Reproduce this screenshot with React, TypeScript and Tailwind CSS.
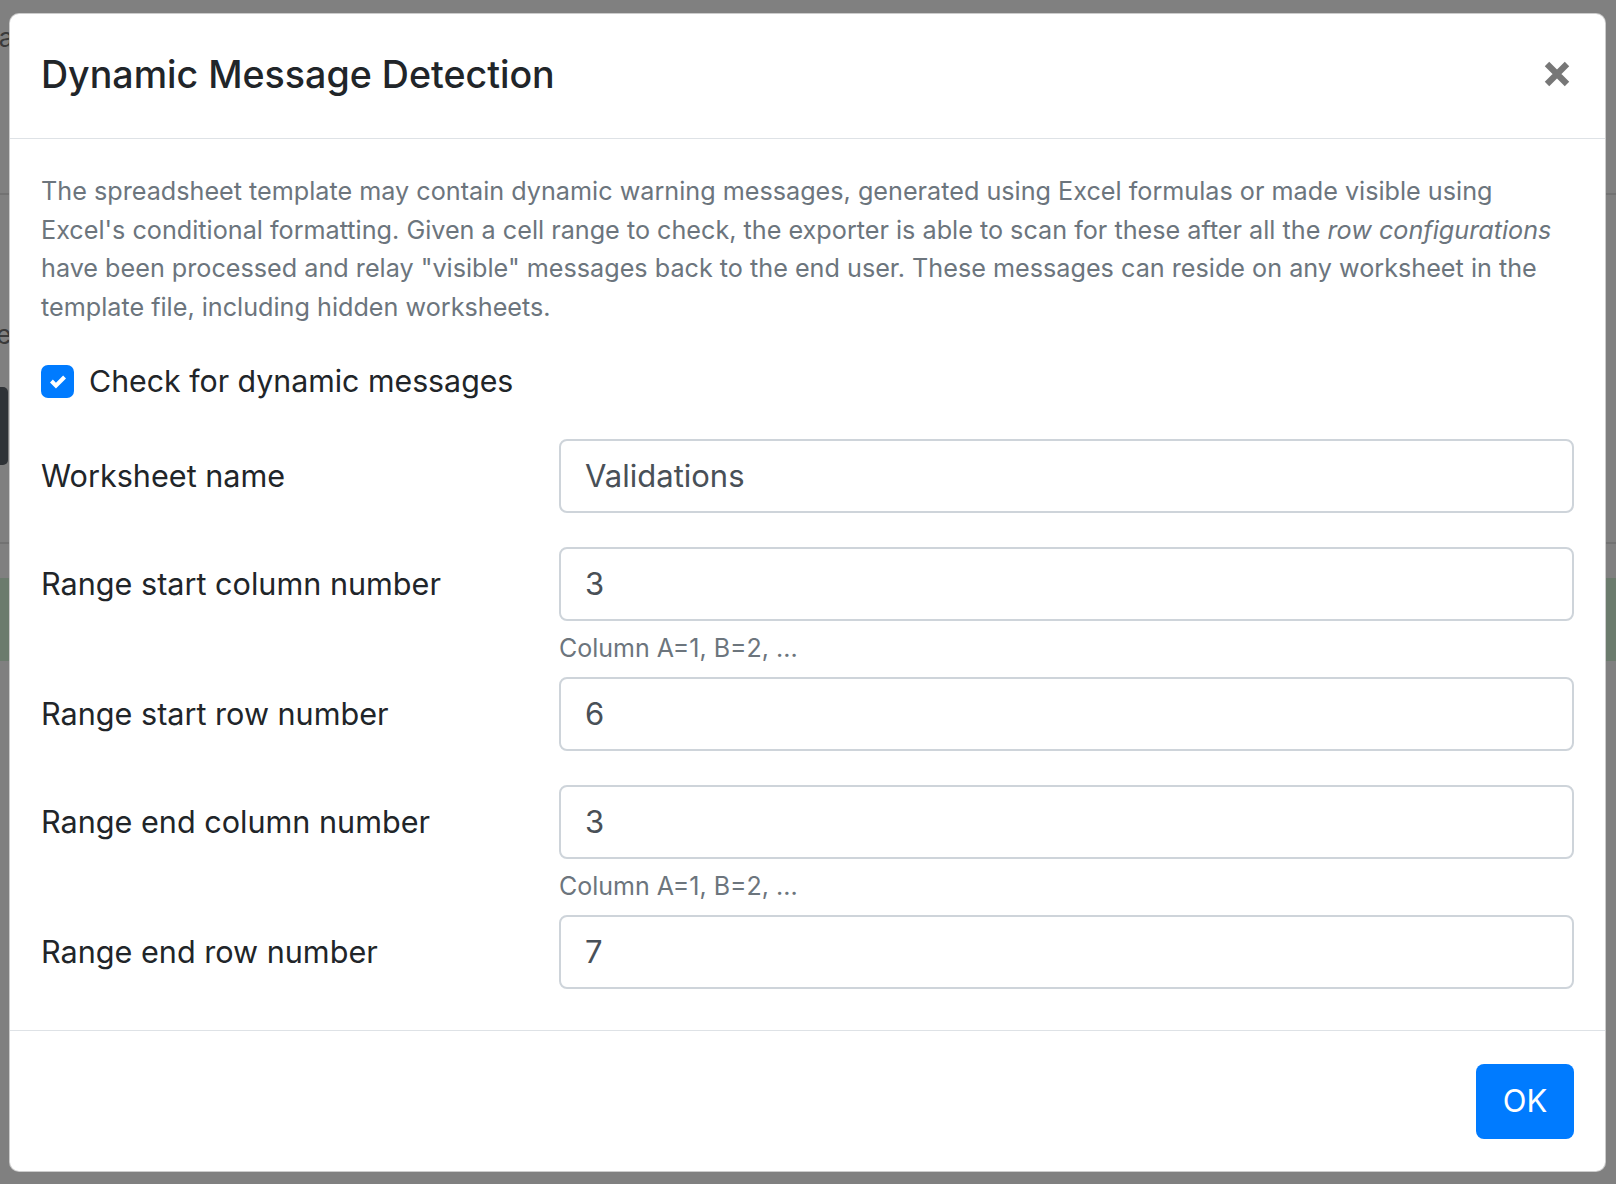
import React from "react";

function Field({ label, value, help }: { label: string; value: string; help?: string }) {
  return (
    <div className={help ? "flex mb-[10px]" : "flex mb-[34px] last:mb-0"}>
      <div className="w-[518px] shrink-0 h-[74px] flex items-center text-[30.6px] text-[#212529]">{label}</div>
      <div className="flex-1 flex flex-col">
        <div className="h-[74px] border-2 border-[#ced4da] rounded-[8px] px-[24px] flex items-center text-[31px] text-[#495057] bg-white">
          {value}
        </div>
        {help && <div className="mt-[8px] text-[25px] leading-[38px] text-[#6c757d]">{help}</div>}
      </div>
    </div>
  );
}

export default function App() {
  return (
    <div className="relative w-full h-[1184px] overflow-hidden bg-[#808080] font-['Inter','Noto_Sans',sans-serif]">
      {/* page behind the backdrop */}
      <div className="pt-[18px] h-[193px] text-[26px] text-[#3a3a3a] -ml-[10px]">ta</div>
      <div className="h-[2px] bg-[#727272]" />
      <div className="h-[130px]" />
      <div className="text-[26px] text-[#3a3a3a] -ml-[10px] leading-[20px]">ie</div>
      <div className="h-[42px]" />
      <div className="w-[8px] h-[78px] bg-[#2f3337] rounded-r-[5px]" />
      <div className="h-[77px]" />
      <div className="h-[2px] bg-[#727272]" />
      <div className="h-[34px]" />
      <div className="h-[83px] bg-[#6b7b6d]" />

      {/* modal */}
      <div className="absolute left-[9px] top-[13px] w-[1597px] bg-white rounded-[10px] border border-black/20">
        <div className="h-[125px] pl-[31px] pr-[35px] flex items-center justify-between border-b border-[#dee2e6]">
          <h5 className="text-[37.6px] font-medium text-[#212529] leading-none -mt-[2px]">Dynamic Message Detection</h5>
          <svg width="26" height="26" viewBox="0 0 26 26" className="block -mt-[4px]">
            <path d="M3 3L23 23M23 3L3 23" stroke="#777777" strokeWidth="6.3" strokeLinecap="butt" />
          </svg>
        </div>
        <div className="pt-[33px] pb-[41px] px-[31px]">
          <p className="text-[25.2px] leading-[38.5px] text-[#6c757d] mb-[32px]">
            The spreadsheet template may contain dynamic warning messages, generated using Excel formulas or made visible using
            <br />
            Excel's conditional formatting. Given a cell range to check, the exporter is able to scan for these after all the{" "}
            <i>row configurations</i>
            <br />
            have been processed and relay "visible" messages back to the end user. These messages can reside on any worksheet in the
            <br />
            template file, including hidden worksheets.
          </p>
          <div className="h-[47px] flex items-center gap-[15px] mb-[34px]">
            <div className="w-[33px] h-[33px] rounded-[7px] bg-[#007bff] flex items-center justify-center">
              <svg width="16" height="16" viewBox="0 0 8 8">
                <path fill="#fff" d="M6.564.75l-3.59 3.612-1.538-1.55L0 4.26 2.974 7.25 8 2.193z" />
              </svg>
            </div>
            <span className="text-[30.3px] text-[#212529]">Check for dynamic messages</span>
          </div>
          <Field label="Worksheet name" value="Validations" />
          <Field label="Range start column number" value="3" help="Column A=1, B=2, ..." />
          <Field label="Range start row number" value="6" />
          <Field label="Range end column number" value="3" help="Column A=1, B=2, ..." />
          <Field label="Range end row number" value="7" />
        </div>
        <div className="border-t border-[#dee2e6] pt-[33px] pb-[32px] pr-[31px] flex justify-end">
          <div className="w-[98px] h-[75px] rounded-[8px] bg-[#007bff] text-white text-[31px] flex items-center justify-center">
            OK
          </div>
        </div>
      </div>
    </div>
  );
}
